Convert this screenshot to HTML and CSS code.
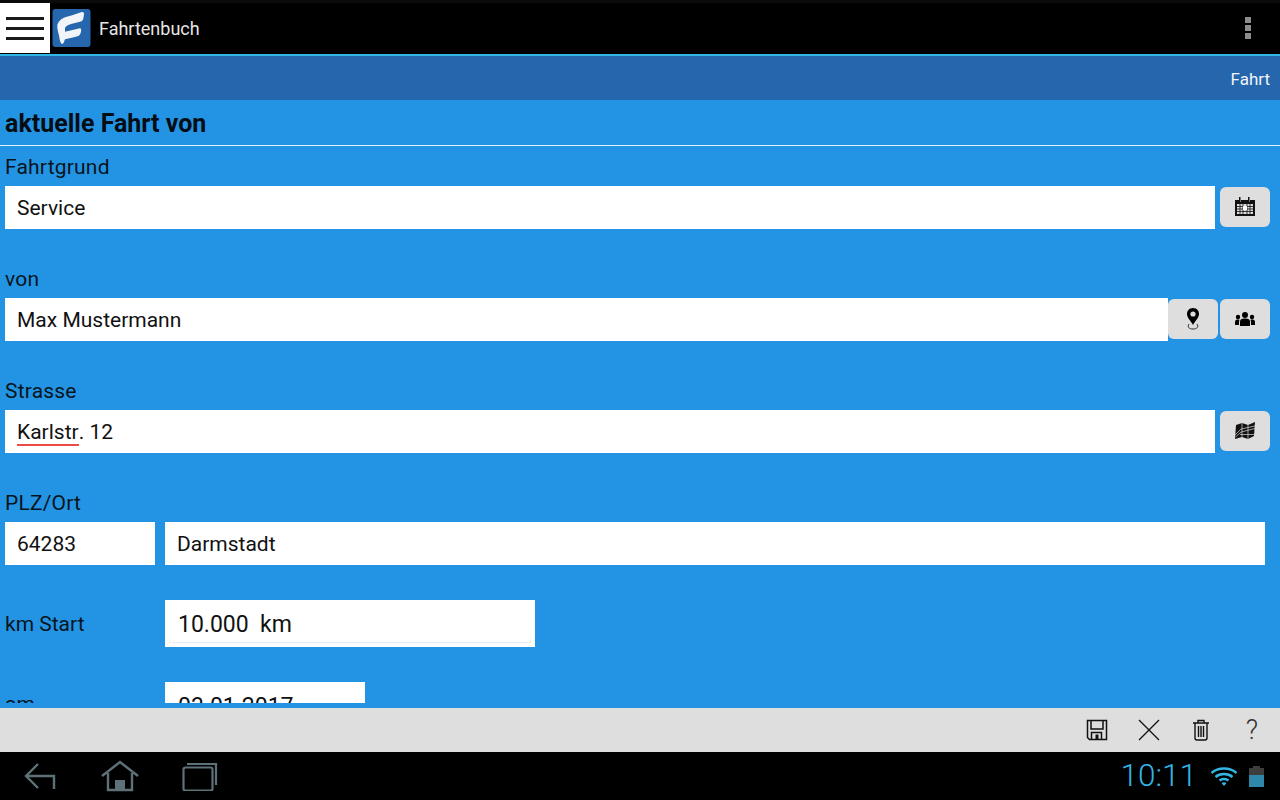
FILE: index.html
```html
<!DOCTYPE html>
<html lang="de">
<head>
<meta charset="utf-8">
<title>Fahrtenbuch</title>
<link rel="stylesheet" href="styles.css">
</head>
<body>
<div class="app">
  <header class="topbar">
    <div class="menu-btn"><span></span><span></span><span></span></div>
    <svg class="logo" width="39" height="39" viewBox="0 0 39 39"><rect x="0.500" y="0" width="38" height="38" rx="3" fill="#2566ad"/><path d="M5.300 16C7 11 11 8.500 14.700 7.700C20 6.500 25 4.500 29.700 3C31 2.700 32.300 3.500 32 5C31.700 7.500 31.500 10 30.700 11C30 12 29 12.500 28 12.700C24 13.500 20 14.500 16.300 16C14.500 16.800 13.300 18 13 19.300C13 20.500 13 21.700 13 22.700C18 21.500 23 20.300 28 19.300C29 19.100 29.500 21 29 22.700C28.500 24.700 27.500 26.500 26.300 27C22 28.500 17.500 29.300 13 30.300C12.500 31.500 12 33.500 11.300 34.300C10.500 35 9.500 35 9 34.300C8 32 7.500 30 7.300 27.700C6.500 24 5 20 5.300 16Z" fill="#f2f5f8"/></svg>
    <div class="app-title">Fahrtenbuch</div>
    <div class="overflow"><i></i><i></i><i></i></div>
  </header>
  <div class="subbar">Fahrt</div>
  <main class="content">
    <h1 class="heading">aktuelle Fahrt von</h1>
    <section class="field">
      <div class="label">Fahrtgrund</div>
      <div class="row">
        <div class="input grow">Service</div>
        <button class="btn"><svg width="20" height="20" viewBox="0 0 20 20"><path d="M0 3H4V0H5.500V5H6V3H13V0H14.500V5H15V3H20V19H0Z" fill="#111"/><path d="M2 7H18V17H2Z" fill="#ddd"/><path d="M2 9.500H18M2 12H18M2 14.500H18M5 7V17M8 7V17M12 7V17M15 7V17" stroke="#222" stroke-width="0.900"/><rect x="8" y="9" width="4" height="4" fill="#fff"/></svg></button>
      </div>
    </section>
    <section class="field">
      <div class="label">von</div>
      <div class="row tight">
        <div class="input grow">Max Mustermann</div>
        <button class="btn"><svg width="14" height="22" viewBox="0 0 14 22"><path d="M7 0C3 0 1 3 1 6C1 10 5 13 7 17C9 13 13 10 13 6C13 3 11 0 7 0Z" fill="#000"/><circle cx="7" cy="6" r="2.600" fill="#ddd"/><path d="M3 16C1 19 3 21 7 21C11 21 13 19 11 16" fill="none" stroke="#333" stroke-width="1"/></svg></button>
        <button class="btn btn-next"><svg width="20" height="14" viewBox="0 0 20 14"><circle cx="10" cy="3" r="3"/><circle cx="3" cy="5" r="2.200"/><circle cx="17" cy="5" r="2.200"/><path d="M5 14V10C5 7 7 6.500 10 6.500C13 6.500 15 7 15 10V14Z"/><path d="M0 13V10C0 8 1.500 7.500 3 7.500C3.500 7.500 4.500 7.500 4.500 8C4 9 4 10 4 13ZM20 13V10C20 8 18.500 7.500 17 7.500C16.500 7.500 15.500 7.500 15.500 8C16 9 16 10 16 13Z"/></svg></button>
      </div>
    </section>
    <section class="field">
      <div class="label">Strasse</div>
      <div class="row">
        <div class="input grow"><span class="misspelled">Karlstr</span>. 12</div>
        <button class="btn"><svg width="20" height="18" viewBox="0 0 20 18"><path d="M1 3L7 1L13 3L20 0L19 14L13 17L7 15L0 17Z" fill="#111"/><path d="M0 13L6 7L20 4M0.500 15L6 10L20 6.500M7 1V15M13 3V17M5 12.500H20" fill="none" stroke="#ddd" stroke-width="0.700"/></svg></button>
      </div>
    </section>
    <section class="field">
      <div class="label">PLZ/Ort</div>
      <div class="row wide">
        <div class="input plz">64283</div>
        <div class="input grow">Darmstadt</div>
      </div>
    </section>
    <section class="inline-field km">
      <div class="inline-label">km Start</div>
      <div class="input km-input"><span class="km-text">10.000&nbsp; km</span></div>
    </section>
    <section class="inline-field date">
      <div class="inline-label">am</div>
      <div class="input date-input">03.01.2017</div>
    </section>
  </main>
  <div class="actionbar">
    <svg class="act" width="22" height="22" viewBox="0 0 22 22" fill="none" stroke="#111" stroke-width="1.500"><path d="M1.500 1.500H20.500V20.500H3.500L1.500 18.500Z"/><path d="M5 1.500V10H17V1.500M5.500 20.500V13.500H15.500V20.500"/><rect x="9.500" y="15.500" width="3" height="5" fill="#111" stroke="none"/></svg>
    <svg class="act" width="22" height="22" viewBox="0 0 22 22" stroke="#111" stroke-width="1.300"><path d="M1 1L21 21M21 1L1 21"/></svg>
    <svg class="act" width="18" height="22" viewBox="0 0 18 22" fill="none" stroke="#111" stroke-width="1.400"><path d="M1 4H17M6 4V1.500H12V4M3 4V19C3 20.500 4 21 5 21H13C14 21 15 20.500 15 19V4"/><path d="M6.500 7V18M9 7V18M11.500 7V18"/></svg>
    <div class="help">?</div>
  </div>
  <footer class="navbar">
    <div class="nav-icons">
      <svg width="32" height="28" viewBox="0 0 32 28" fill="none" stroke="#5f7178" stroke-width="2.400"><path d="M14 2L2 14L14 26M3 14H30V27"/></svg>
      <svg width="40" height="32" viewBox="0 0 40 32" fill="none" stroke="#5f7178" stroke-width="2.400"><path d="M2 16L20 2L38 16M8 13V30H32V13"/><rect x="15" y="20" width="10" height="10" fill="#5f7178" stroke="none"/></svg>
      <svg class="recents" width="36" height="30" viewBox="0 0 36 30" fill="none" stroke="#5f7178" stroke-width="2.200"><rect x="1.500" y="6.500" width="29" height="23" rx="2"/><path d="M5 3H34V24"/></svg>
    </div>
    <div class="status">
      <span class="clock">10:11</span>
      <svg class="wifi" width="28" height="20" viewBox="0 0 28 20" fill="none" stroke="#33b5e5" stroke-width="2.500"><path d="M1.500 7C8 1 20 1 26.500 7M5.500 11C10 7 18 7 22.500 11M9.500 14.500C12 12.500 16 12.500 18.500 14.500"/><path d="M11.500 17L14 20L16.500 17C15 16 13 16 11.500 17Z" fill="#33b5e5" stroke="none"/></svg>
      <svg width="15" height="21" viewBox="0 0 15 21"><path d="M4 0H11V2H15V21H0V2H4Z" fill="#3d3d3d"/><rect y="9" width="15" height="12" fill="#2f86ab"/></svg>
    </div>
  </footer>
</div>
</body>
</html>
```

FILE: styles.css
```css
* { box-sizing: border-box; }
html, body { margin: 0; padding: 0; }
body { width: 1280px; height: 800px; overflow: hidden; font-family: Roboto, "Liberation Sans", sans-serif; background: #000; }
.app { display: flex; flex-direction: column; height: 800px; background: #2394e4; }

.topbar { height: 56px; flex: none; display: flex; align-items: flex-start; background: #000; border-top: 3px solid #0a0a0a; border-bottom: 2px solid #33b5e5; }
.menu-btn { width: 50px; height: 50px; background: #fff; display: flex; flex-direction: column; gap: 7px; padding: 14px 6px 0; }
.menu-btn span { display: block; height: 3px; background: #1a1a1a; }
.logo { margin: 6px 0 0 2px; flex: none; }
.app-title { margin: 13px 0 0 8px; color: #e6e6e6; font-size: 18px; line-height: 26px; }
.overflow { margin: 14px 29px 0 auto; display: flex; flex-direction: column; gap: 2px; }
.overflow i { display: block; width: 6px; height: 6px; background: #8c8c8c; }

.subbar { height: 44px; flex: none; background: #2566ad; color: #f0f4f8; font-size: 17px; line-height: 47px; text-align: right; padding-right: 10px; }

.content { height: 603px; flex: none; overflow: hidden; background: #2394e4; padding: 0 10px 0 5px; color: #08141c; }
.heading { margin: 0 -10px 0 -5px; padding: 11px 0 7px 5px; height: 46px; font-size: 25px; line-height: 26px; font-weight: 700; color: #050d14; border-bottom: 1px solid #e4f1fb; }
.field { height: 112px; }
.label { font-size: 21px; line-height: 24px; letter-spacing: 0.2px; padding-top: 9px; height: 40px; }
.row { display: flex; gap: 5px; align-items: flex-start; }
.row.tight { gap: 0; }
.row.wide { gap: 10px; padding-right: 5px; }
.input { height: 43px; background: #fff; color: #111; font-size: 21px; line-height: 45px; padding-left: 12px; }
.grow { flex: 1; }
.plz { width: 150px; }
.btn { width: 50px; height: 40px; margin-top: 1px; padding: 0; border: 0; border-radius: 6px; background: #dedede; display: flex; align-items: center; justify-content: center; flex: none; }
.btn-next { margin-left: 2px; }
.misspelled { border-bottom: 2px solid #f04a45; display: inline-block; line-height: 26px; height: 27px; }

.inline-field { display: flex; align-items: flex-start; }
.inline-label { width: 160px; font-size: 21px; line-height: 24px; }
.km { height: 82px; margin-top: 6px; }
.km .inline-label { padding-top: 12px; }
.km-input { width: 370px; height: 47px; padding: 0 4px; position: relative; font-size: 23px; line-height: 49px; }
.km-text { padding-left: 9px; }
.km-input::after { content: ""; position: absolute; left: 4px; right: 4px; bottom: 4px; height: 3px; border: 1px solid #eee; border-top: 0; }
.date .inline-label { padding-top: 10px; }
.date-input { width: 200px; font-size: 23px; line-height: 50px; padding-left: 13px; }

.actionbar { height: 44px; flex: none; margin-top: 5px; background: #dedede; display: flex; align-items: center; justify-content: flex-end; padding-right: 20px; }
.act { margin-right: 30px; }
.act:nth-child(2) { margin-right: 32px; }
.act:nth-child(3) { margin-right: 34px; }
.help { width: 16px; color: #333; font-size: 27px; line-height: 30px; font-weight: 300; text-align: center; }

.navbar { height: 48px; flex: none; background: #000; display: flex; align-items: center; justify-content: space-between; padding: 0 16px 0 24px; }
.nav-icons { display: flex; align-items: center; gap: 44px; }
.recents { margin-left: -2px; }
.status { display: flex; align-items: center; gap: 13px; }
.wifi { margin-right: -2px; }
.clock { color: #33b5e5; font-size: 31.5px; font-weight: 300; line-height: 48px; }
```
